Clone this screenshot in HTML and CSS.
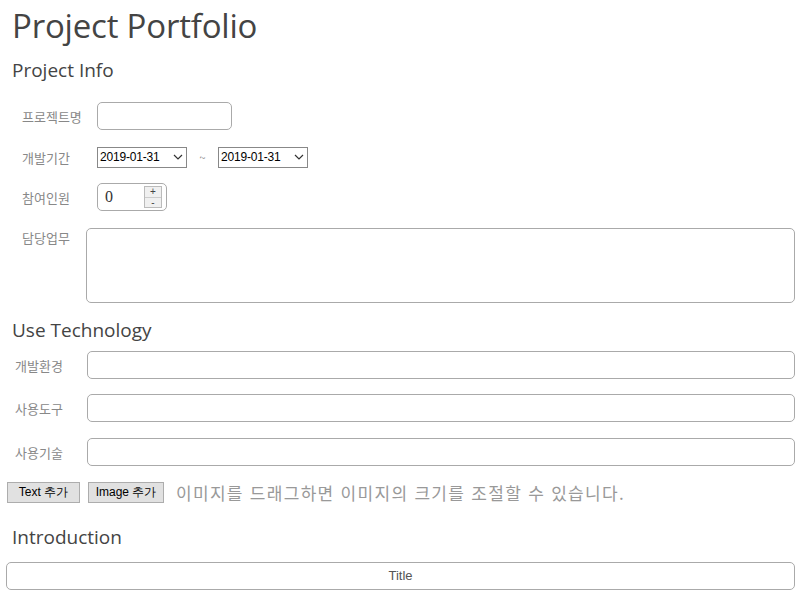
FILE: index.html
```html
<!DOCTYPE html>
<html lang="ko">
<head>
<meta charset="utf-8">
<link rel="stylesheet" href="styles.css">
</head>
<body>
<div class="page">
  <h1 class="title">Project Portfolio</h1>
  <h2 class="section">Project Info</h2>
  <div class="info">
    <div class="row r-name">
      <span class="label">프로젝트명</span>
      <input class="box name" type="text">
    </div>
    <div class="row r-date">
      <span class="label">개발기간</span>
      <span class="date">2019-01-31<svg class="chev" viewBox="0 0 10 6" width="10" height="6"><path d="M1 1 L5 5 L9 1" fill="none" stroke="#333" stroke-width="1.2"/></svg></span>
      <span class="tilde">~</span>
      <span class="date">2019-01-31<svg class="chev" viewBox="0 0 10 6" width="10" height="6"><path d="M1 1 L5 5 L9 1" fill="none" stroke="#333" stroke-width="1.2"/></svg></span>
    </div>
    <div class="row r-num">
      <span class="label">참여인원</span>
      <span class="box num"><span class="numval">0</span><span class="spin"><span class="sp">+</span><span class="sp">-</span></span></span>
    </div>
    <div class="row r-task">
      <span class="label label-top">담당업무</span>
      <span class="box task"></span>
    </div>
  </div>
  <h2 class="section sec2">Use Technology</h2>
  <div class="tech">
    <div class="trow"><span class="tlabel">개발환경</span><span class="box wide"></span></div>
    <div class="trow"><span class="tlabel">사용도구</span><span class="box wide"></span></div>
    <div class="trow t3"><span class="tlabel">사용기술</span><span class="box wide"></span></div>
  </div>
  <div class="actions">
    <button class="btn b1">Text 추가</button>
    <button class="btn b2">Image 추가</button>
    <span class="hint">이미지를 드래그하면 이미지의 크기를 조절할 수 있습니다.</span>
  </div>
  <h2 class="section sec3">Introduction</h2>
  <div class="box titlebox">Title</div>
</div>
</body>
</html>
```
FILE: styles.css
```css
* { box-sizing: border-box; }
html, body { margin: 0; padding: 0; background: #fff; }
body { font-family: "Noto Sans CJK KR", "Noto Sans", sans-serif; color: #444; }
.page { padding: 0 3px 0 6px; width: 798px; }
.title { margin: 0; padding: 4px 0 0 6px; font-weight: 400; font-size: 33px; line-height: 44px; color: #444; font-family: "Open Sans", "Noto Sans CJK KR", sans-serif; letter-spacing: -0.2px; }
.section { margin: 0; padding-left: 6px; font-weight: 400; font-size: 19px; line-height: 26px; color: #444; font-family: "Open Sans", "Noto Sans CJK KR", sans-serif; }
.title + .section { margin-top: 9px; }
.info { padding-top: 19px; }
.row { display: flex; align-items: center; }
.label { width: 91px; padding-left: 16px; font-size: 13px; color: #888; flex: none; }
.box { display: block; border: 1px solid #aaa; border-radius: 5px; background: #fff; }
.name { width: 135px; height: 28px; font: inherit; }
.r-date { margin-top: 16px; height: 22px; }
.date { display: flex; align-items: center; justify-content: space-between; width: 90px; height: 21px; border: 1px solid #888; padding: 0 2px 0 2px; font-family: "Liberation Sans", sans-serif; font-size: 12px; color: #000; letter-spacing: -0.2px; }
.chev { margin-right: 1px; }
.tilde { width: 31px; text-align: center; font-size: 11px; color: #888; }
.r-num { margin-top: 15px; }
.num { width: 70px; height: 28px; display: flex; align-items: center; justify-content: space-between; padding: 0 4px 0 7px; }
.numval { font-family: "Liberation Serif", serif; font-size: 16px; color: #333; }
.spin { display: flex; flex-direction: column; width: 18px; height: 22px; border: 1px solid #bbb; background: #f0f0f0; }
.sp { height: 10px; display: flex; align-items: center; justify-content: center; font-family: "Liberation Sans", sans-serif; font-size: 10px; line-height: 10px; color: #444; }
.sp + .sp { border-top: 1px solid #ccc; }
.r-task { margin-top: 17px; align-items: flex-start; }
.r-task .label { width: 80px; padding-left: 16px; padding-top: 0; }
.task { flex: 1; height: 75px; margin-right: 0; }
.sec2 { margin-top: 14px; }
.tech { padding-top: 8px; }
.trow { display: flex; align-items: center; height: 28px; margin-top: 0; }
.trow + .trow { margin-top: 15px; }
.trow.t3 { margin-top: 16px; }
.tlabel { width: 81px; padding-left: 9px; font-size: 13px; color: #888; flex: none; }
.wide { flex: 1; height: 28px; }
.actions { display: flex; align-items: center; margin-top: 14px; padding-left: 1px; }
.btn { height: 21px; padding: 0; text-align: center; font-family: "Liberation Sans", sans-serif; font-size: 12px; color: #000; background: #e1e1e1; border: 1px solid #adadad; border-radius: 0; margin: 0 8px 0 0; }
.b1 { width: 73px; }
.b2 { width: 76px; margin-right: 0; }
.hint { margin-left: 12px; font-size: 17px; color: #999; letter-spacing: 1.3px; }
.sec3 { margin-top: 19px; }
.titlebox { margin-top: 12px; height: 28px; text-align: center; line-height: 26px; font-family: "Liberation Sans", sans-serif; font-size: 13px; color: #555; }
```
